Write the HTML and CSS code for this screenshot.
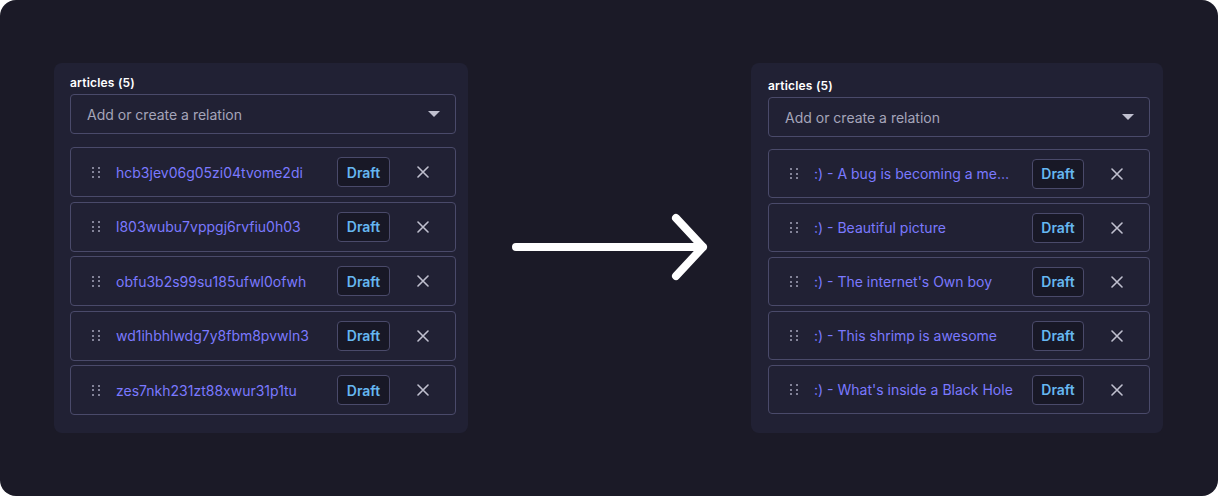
FILE: index.html
```html
<!DOCTYPE html>
<html>
<head>
<meta charset="utf-8">
<link rel="stylesheet" href="styles.css">
</head>
<body>
<div class="stage">
  <section class="panel panel-left">
    <div class="label">articles (5)</div>
    <div class="combo">
      <span class="placeholder">Add or create a relation</span>
      <svg class="caret" width="12" height="6" viewBox="0 0 12 6"><path d="M0 0h12L6 6z" fill="#c0c0cf"/></svg>
    </div>
    <ul class="list">
      <li class="item"><span class="handle"><i></i><i></i><i></i><i></i><i></i><i></i></span><span class="title">hcb3jev06g05zi04tvome2di</span><span class="badge">Draft</span><span class="remove"><svg width="12" height="12" viewBox="0 0 12 12"><path d="M1 1l10 10M11 1L1 11" stroke="#c0c0cf" stroke-width="1.6" stroke-linecap="round"/></svg></span></li>
      <li class="item"><span class="handle"><i></i><i></i><i></i><i></i><i></i><i></i></span><span class="title">l803wubu7vppgj6rvfiu0h03</span><span class="badge">Draft</span><span class="remove"><svg width="12" height="12" viewBox="0 0 12 12"><path d="M1 1l10 10M11 1L1 11" stroke="#c0c0cf" stroke-width="1.6" stroke-linecap="round"/></svg></span></li>
      <li class="item"><span class="handle"><i></i><i></i><i></i><i></i><i></i><i></i></span><span class="title">obfu3b2s99su185ufwl0ofwh</span><span class="badge">Draft</span><span class="remove"><svg width="12" height="12" viewBox="0 0 12 12"><path d="M1 1l10 10M11 1L1 11" stroke="#c0c0cf" stroke-width="1.6" stroke-linecap="round"/></svg></span></li>
      <li class="item"><span class="handle"><i></i><i></i><i></i><i></i><i></i><i></i></span><span class="title">wd1ihbhlwdg7y8fbm8pvwln3</span><span class="badge">Draft</span><span class="remove"><svg width="12" height="12" viewBox="0 0 12 12"><path d="M1 1l10 10M11 1L1 11" stroke="#c0c0cf" stroke-width="1.6" stroke-linecap="round"/></svg></span></li>
      <li class="item"><span class="handle"><i></i><i></i><i></i><i></i><i></i><i></i></span><span class="title">zes7nkh231zt88xwur31p1tu</span><span class="badge">Draft</span><span class="remove"><svg width="12" height="12" viewBox="0 0 12 12"><path d="M1 1l10 10M11 1L1 11" stroke="#c0c0cf" stroke-width="1.6" stroke-linecap="round"/></svg></span></li>
    </ul>
  </section>

  <div class="arrow">
    <svg width="206" height="72" viewBox="0 0 206 72"><path d="M9 36H196M169 7l27 29-27 29" fill="none" stroke="#ffffff" stroke-width="8" stroke-linecap="round" stroke-linejoin="round"/></svg>
  </div>

  <section class="panel panel-right">
    <div class="label">articles (5)</div>
    <div class="combo">
      <span class="placeholder">Add or create a relation</span>
      <svg class="caret" width="12" height="6" viewBox="0 0 12 6"><path d="M0 0h12L6 6z" fill="#c0c0cf"/></svg>
    </div>
    <ul class="list">
      <li class="item"><span class="handle"><i></i><i></i><i></i><i></i><i></i><i></i></span><span class="title">:) - A bug is becoming a meme on the internet</span><span class="badge">Draft</span><span class="remove"><svg width="12" height="12" viewBox="0 0 12 12"><path d="M1 1l10 10M11 1L1 11" stroke="#c0c0cf" stroke-width="1.6" stroke-linecap="round"/></svg></span></li>
      <li class="item"><span class="handle"><i></i><i></i><i></i><i></i><i></i><i></i></span><span class="title">:) - Beautiful picture</span><span class="badge">Draft</span><span class="remove"><svg width="12" height="12" viewBox="0 0 12 12"><path d="M1 1l10 10M11 1L1 11" stroke="#c0c0cf" stroke-width="1.6" stroke-linecap="round"/></svg></span></li>
      <li class="item"><span class="handle"><i></i><i></i><i></i><i></i><i></i><i></i></span><span class="title">:) - The internet's Own boy</span><span class="badge">Draft</span><span class="remove"><svg width="12" height="12" viewBox="0 0 12 12"><path d="M1 1l10 10M11 1L1 11" stroke="#c0c0cf" stroke-width="1.6" stroke-linecap="round"/></svg></span></li>
      <li class="item"><span class="handle"><i></i><i></i><i></i><i></i><i></i><i></i></span><span class="title">:) - This shrimp is awesome</span><span class="badge">Draft</span><span class="remove"><svg width="12" height="12" viewBox="0 0 12 12"><path d="M1 1l10 10M11 1L1 11" stroke="#c0c0cf" stroke-width="1.6" stroke-linecap="round"/></svg></span></li>
      <li class="item"><span class="handle"><i></i><i></i><i></i><i></i><i></i><i></i></span><span class="title">:) - What's inside a Black Hole</span><span class="badge">Draft</span><span class="remove"><svg width="12" height="12" viewBox="0 0 12 12"><path d="M1 1l10 10M11 1L1 11" stroke="#c0c0cf" stroke-width="1.6" stroke-linecap="round"/></svg></span></li>
    </ul>
  </section>
</div>
</body>
</html>
```

FILE: styles.css
```css
* { box-sizing: border-box; }
html, body { margin: 0; padding: 0; background: #ffffff; }
body { font-family: Inter, "Noto Sans", sans-serif; }

.stage {
  width: 1218px;
  height: 496px;
  background: #1b1a27;
  border-radius: 16px;
  display: flex;
  align-items: flex-start;
  padding: 63px 0 0 54px;
}

.panel {
  background: #212134;
  border-radius: 8px;
  height: 370px;
  display: flex;
  flex-direction: column;
}
.panel-left { width: 414px; padding: 12px 12px 0 16px; }
.panel-right { width: 412px; padding: 15px 13px 0 17px; }

.label {
  color: #ffffff;
  font-size: 12px;
  font-weight: 600;
  line-height: 16px;
  margin-bottom: 3px;
  letter-spacing: 0.2px;
}

.combo {
  height: 40px;
  border: 1px solid #4a4a6a;
  border-radius: 4px;
  display: flex;
  align-items: center;
  justify-content: space-between;
  padding: 0 15px 0 16px;
}
.placeholder { color: #a5a5ba; font-size: 14px; }
.caret { display: block; }

.list {
  list-style: none;
  margin: 13px 0 0;
  padding: 0;
  display: flex;
  flex-direction: column;
  gap: 4.5px;
}
.panel-right .list { margin-top: 12px; gap: 5px; }

.item {
  height: 50px;
  border: 1px solid #4a4a6a;
  border-radius: 4px;
  display: flex;
  align-items: center;
  padding: 0 16px 0 21px;
}
.panel-right .item { height: 49px; }

.handle {
  width: 8px;
  display: grid;
  grid-template-columns: 2px 2px;
  column-gap: 4px;
  row-gap: 2.5px;
  margin-right: 16px;
  flex: none;
}
.handle i { display: block; width: 2px; height: 2px; background: #a5a5ba; border-radius: 1px; }

.title {
  flex: 1;
  min-width: 0;
  color: #7b79ff;
  font-size: 14px;
  white-space: nowrap;
  overflow: hidden;
  text-overflow: ellipsis;
  margin-right: 15px;
}

.badge {
  flex: none;
  height: 30px;
  width: 53px;
  border: 1px solid #4a4a6a;
  border-radius: 4px;
  background: #181826;
  color: #66b7f1;
  font-size: 14px;
  font-weight: 600;
  display: flex;
  align-items: center;
  justify-content: center;
}
.panel-right .badge { width: 52px; }

.remove {
  flex: none;
  width: 32px;
  margin-left: 17px;
  display: flex;
  justify-content: center;
}
.remove svg { display: block; }

.arrow {
  width: 283px;
  height: 370px;
  display: flex;
  align-items: center;
  justify-content: center;
  padding-bottom: 2px;
}
.arrow svg { display: block; }
```
